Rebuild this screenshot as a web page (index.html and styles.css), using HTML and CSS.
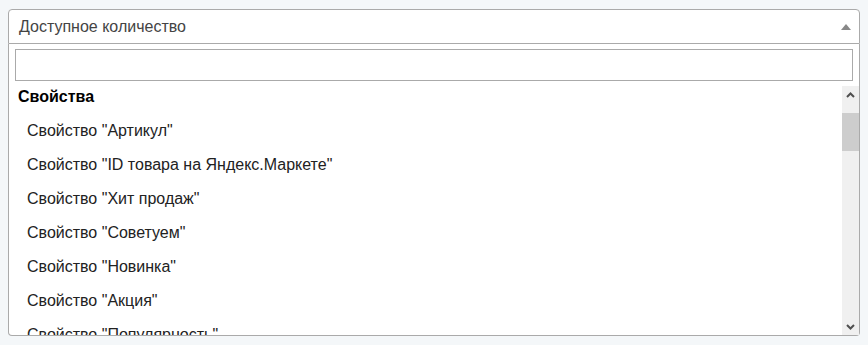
FILE: index.html
```html
<!DOCTYPE html>
<html lang="ru">
<head>
    <meta charset="UTF-8">
    <title>Доступное количество</title>
    <link rel="stylesheet" href="styles.css">
</head>
<body>
    <div class="page">
        <div class="behind-btn"></div>

        <div class="select">
            <span class="select-value">Доступное количество</span>
            <span class="select-arrow"></span>
        </div>

        <div class="dropdown">
            <div class="search">
                <input type="text" class="search-field">
            </div>
            <div class="results">
                <ul class="results-list">
                    <li class="group-label">Свойства</li>
                    <li class="option">Свойство "Артикул"</li>
                    <li class="option">Свойство "ID товара на Яндекс.Маркете"</li>
                    <li class="option">Свойство "Хит продаж"</li>
                    <li class="option">Свойство "Советуем"</li>
                    <li class="option">Свойство "Новинка"</li>
                    <li class="option">Свойство "Акция"</li>
                    <li class="option">Свойство "Популярность"</li>
                </ul>
                <div class="scrollbar">
                    <div class="scroll-btn">
                        <svg width="9" height="6" viewBox="0 0 9 6"><path d="M1 5 L4.5 1.5 L8 5" fill="none" stroke="#505050" stroke-width="2"/></svg>
                    </div>
                    <div class="scroll-track">
                        <div class="scroll-thumb"></div>
                    </div>
                    <div class="scroll-btn">
                        <svg width="9" height="6" viewBox="0 0 9 6"><path d="M1 1 L4.5 4.5 L8 1" fill="none" stroke="#505050" stroke-width="2"/></svg>
                    </div>
                </div>
            </div>
        </div>
    </div>
</body>
</html>
```

FILE: styles.css
```css
body {
    margin: 0;
    padding: 0;
    background: #f4f7f9;
    font-family: Arial, "Liberation Sans", sans-serif;
    overflow: hidden;
}

.page {
    position: relative;
    padding: 9px 8px 0 8px;
    width: 852px;
}

/* button peeking out under the dropdown */
.behind-btn {
    position: absolute;
    left: 33px;
    top: 326px;
    width: 20px;
    height: 15px;
    border-radius: 3px;
    background: #a3a3a3;
}

.select {
    position: relative;
    z-index: 1;
    display: flex;
    align-items: center;
    justify-content: space-between;
    height: 33px;
    padding: 0 8px 0 10px;
    background: #fff;
    border: 1px solid #aaa;
    border-radius: 4px 4px 0 0;
}

.select-value {
    color: #444;
    font-size: 16px;
}

.select-arrow {
    width: 0;
    height: 0;
    margin-top: 1px;
    border-left: 5px solid transparent;
    border-right: 5px solid transparent;
    border-bottom: 6px solid #888;
}

.dropdown {
    position: relative;
    z-index: 1;
    background: #fff;
    border: 1px solid #aaa;
    border-top: none;
    border-radius: 0 0 4px 4px;
}

.search {
    padding: 5px 6px 5px 6px;
}

.search-field {
    display: block;
    box-sizing: border-box;
    width: 100%;
    height: 32px;
    margin: 0;
    border: 1px solid #aaa;
    outline: none;
    font-size: 16px;
}

.results {
    display: flex;
    height: 249px;
    overflow: hidden;
}

.results-list {
    flex: 1;
    margin: 0;
    padding: 0;
    list-style: none;
    font-size: 16px;
    color: #222;
}

.group-label {
    padding: 0 9px 6px 9px;
    line-height: 22px;
    font-weight: bold;
    color: #000;
}

.option {
    padding: 6px 18px;
    line-height: 22px;
    white-space: nowrap;
}

.scrollbar {
    display: flex;
    flex-direction: column;
    width: 17px;
    background: #f0f0f0;
}

.scroll-btn {
    display: flex;
    align-items: center;
    justify-content: center;
    height: 17px;
}

.scroll-track {
    flex: 1;
    padding-top: 10px;
}

.scroll-thumb {
    height: 38px;
    background: #cdcdcd;
}
```
